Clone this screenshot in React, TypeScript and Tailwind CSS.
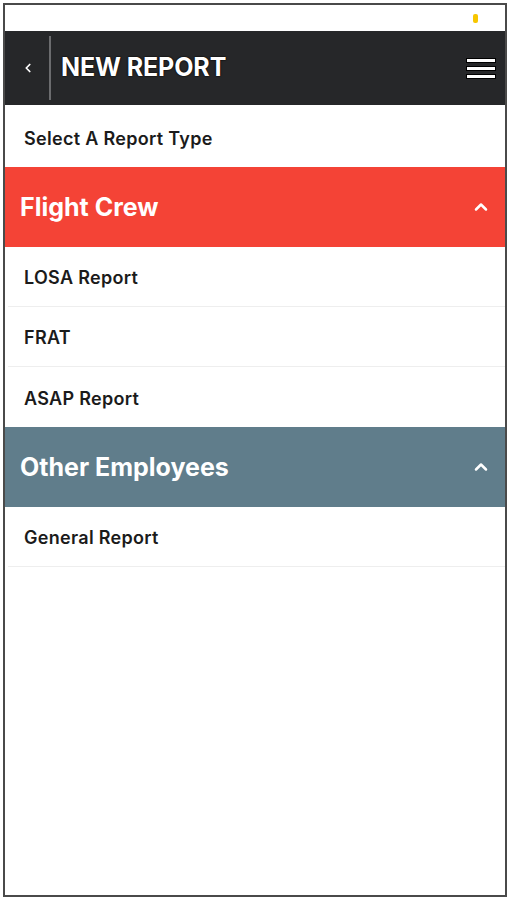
import { ChevronLeft, ChevronUp } from 'lucide-react';

interface Section {
  title: string;
  color: string;
  items: string[];
}

const SECTIONS: Section[] = [
  { title: 'Flight Crew', color: 'bg-[#f44336]', items: ['LOSA Report', 'FRAT', 'ASAP Report'] },
  { title: 'Other Employees', color: 'bg-[#607d8b]', items: ['General Report'] },
];

export default function App() {
  return (
    <div className="w-[510px] h-[900px] bg-white p-[3px] font-['Inter','Liberation_Sans',sans-serif]">
      <div className="h-full border-2 border-[#4a4a4a] flex flex-col bg-white">
        {/* status bar */}
        <div className="h-[26px] flex items-center justify-end pr-[27px]">
          <div className="w-[5px] h-[9px] rounded-[2px] bg-[#f7c600]" />
        </div>

        {/* header */}
        <div className="h-[74px] bg-[#262729] flex items-center">
          <div className="w-[44px] h-full flex items-center justify-center">
            <ChevronLeft size={14} strokeWidth={3} className="text-white ml-[1px]" />
          </div>
          <div className="w-[2px] h-[64px] bg-[#6b6c6e]" />
          <h1 className="ml-[10px] text-white text-[25px] font-bold tracking-[-0.1px] [text-shadow:0_0_2px_#000,0_0_1px_#000]">
            NEW REPORT
          </h1>
          <div className="ml-auto mr-[10px] flex flex-col gap-[5px]">
            <div className="w-[28px] h-[3px] bg-white shadow-[0_0_0_1px_#000]" />
            <div className="w-[28px] h-[3px] bg-white shadow-[0_0_0_1px_#000]" />
            <div className="w-[28px] h-[3px] bg-white shadow-[0_0_0_1px_#000]" />
          </div>
        </div>

        <div className="h-[62px] flex items-center pl-[19px] pt-[4px] text-[18px] font-semibold tracking-[0.3px] text-[#1b1b1b]">
          Select A Report Type
        </div>

        {SECTIONS.map((s) => (
          <div key={s.title}>
            <div className={`h-[80px] ${s.color} flex items-center justify-between pl-[15px] pr-[14px]`}>
              <span className="text-white text-[25px] font-bold tracking-[0px] pt-[2px]">{s.title}</span>
              <ChevronUp size={20} strokeWidth={3} className="text-white" />
            </div>
            {s.items.map((item, i) => (
              <div
                key={item}
                className={`h-[60px] flex items-center pl-[16px] pt-[2px] text-[18px] font-semibold tracking-[0.3px] text-[#1b1b1b] ml-[3px] ${
                  i < s.items.length - 1 || s.title === 'Other Employees' ? 'border-b border-[#eeeeee]' : ''
                }`}
              >
                {item}
              </div>
            ))}
          </div>
        ))}
      </div>
    </div>
  );
}
